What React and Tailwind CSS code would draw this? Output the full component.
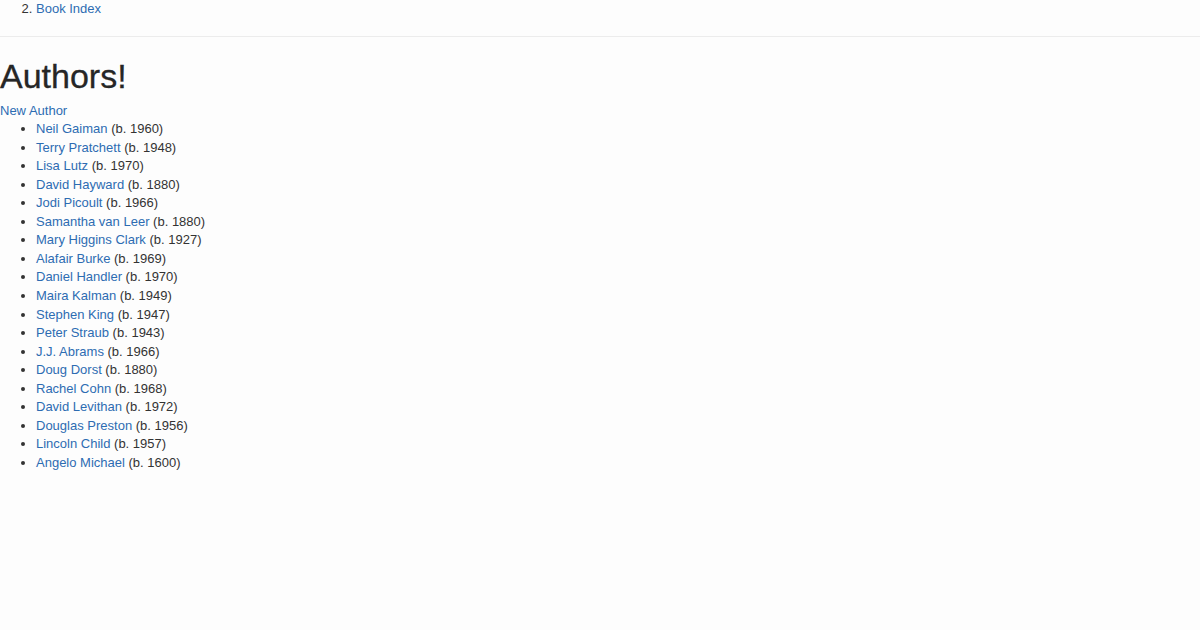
const authors = [
  ["Neil Gaiman", 1960],
  ["Terry Pratchett", 1948],
  ["Lisa Lutz", 1970],
  ["David Hayward", 1880],
  ["Jodi Picoult", 1966],
  ["Samantha van Leer", 1880],
  ["Mary Higgins Clark", 1927],
  ["Alafair Burke", 1969],
  ["Daniel Handler", 1970],
  ["Maira Kalman", 1949],
  ["Stephen King", 1947],
  ["Peter Straub", 1943],
  ["J.J. Abrams", 1966],
  ["Doug Dorst", 1880],
  ["Rachel Cohn", 1968],
  ["David Levithan", 1972],
  ["Douglas Preston", 1956],
  ["Lincoln Child", 1957],
  ["Angelo Michael", 1600],
]

export default function App() {
  return (
    <div className="min-h-screen w-full bg-[#fdfdfd] text-[13px] leading-[18.55px] text-[#333] font-['Helvetica','Liberation_Sans',Arial,sans-serif]">
      <ol start={2} className="list-decimal pl-[36px]">
        <li>
          <a href="#" className="text-[#2d6cb2]">Book Index</a>
        </li>
      </ol>
      <hr className="mt-[17px] border-t border-[#ececec]" />
      <h1 className="mt-[19px] text-[34px] leading-[40px] font-medium text-[#262626] [-webkit-text-stroke:0.3px_#262626]">Authors!</h1>
      <a href="#" className="block mt-[6px] text-[#2d6cb2]">New Author</a>
      <ul className="list-disc pl-[36px]">
        {authors.map(([name, year]) => (
          <li key={name}>
            <a href="#" className="text-[#2d6cb2]">{name}</a> (b. {year})
          </li>
        ))}
      </ul>
    </div>
  )
}
